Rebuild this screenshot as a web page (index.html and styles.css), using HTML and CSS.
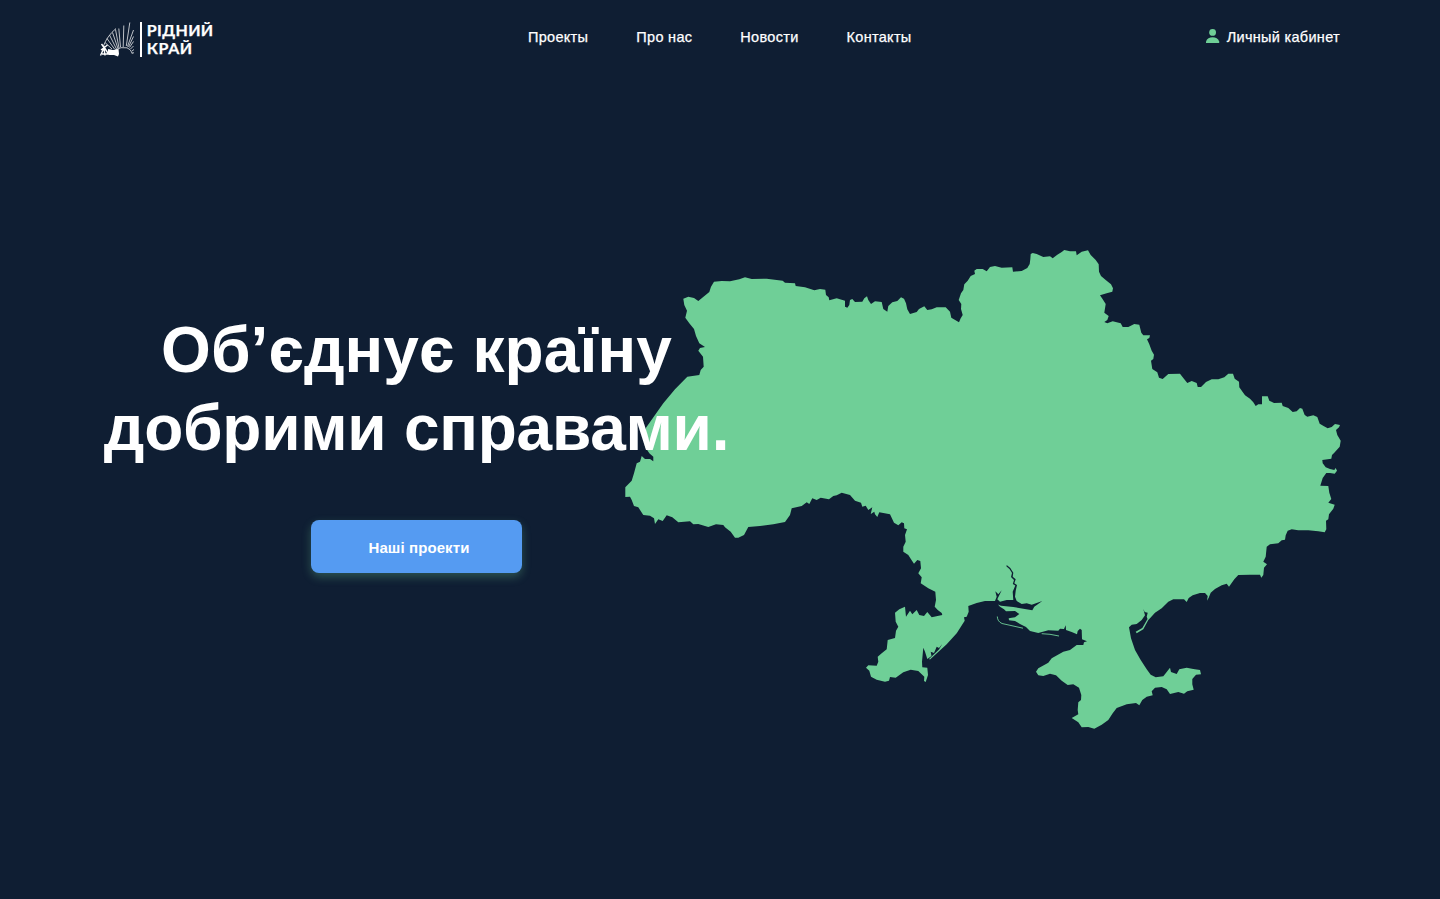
FILE: index.html
```html
<!DOCTYPE html>
<html lang="uk">
<head>
<meta charset="utf-8">
<title>Рідний край</title>
<link rel="stylesheet" href="styles.css">
</head>
<body>
<div class="page">
  <header class="header">
    <a class="logo" aria-label="Рідний край">
      <svg width="114" height="36" viewBox="99 21 114 36">
        <g class="logo-rays">
          <path d="M103 47Q107 36 116 28.500M129.800 22.500L126.300 46M123.800 25.500L123.200 47M118.800 28.500L120.500 47M115.500 29.500L119 48M112.500 32.500L118 48.500M109.500 35L116.500 49M107 38.500L114.500 49M105 42.500L112 49M133.500 30L127.500 46.500M133.500 36.500L128.500 47M133.500 41.500L129.500 47.500M133.500 46L130.500 49M134 49.500L132 51M134 53L132.500 52.500"/>
          <path d="M115 50Q121 46.500 127 47.800Q131 49 132.500 54"/>
        </g>
        <path class="logo-fill" d="M108 49L113 50L118.500 49L119 54L118 56.500L114 55L109 55L108 53Z"/>
        <path class="logo-mill" d="M100.500 55.500L104 48L105 55.500M101.500 44L107 51.500M107.500 45L101 50M104 47L108.500 54M102 54H109"/>
        <rect class="logo-fill" x="140" y="22" width="2" height="35"/>
        <text class="logo-text" x="146.700" y="36" textLength="66.500">РІДНИЙ</text>
        <text class="logo-text" x="146.700" y="54" textLength="45.500">КРАЙ</text>
      </svg>
    </a>
    <nav class="nav">
      <a class="link">Проекты</a>
      <a class="link">Про нас</a>
      <a class="link">Новости</a>
      <a class="link">Контакты</a>
    </nav>
    <a class="account">
      <svg class="account-icon" width="14" height="14" viewBox="0 0 14 14"><circle cx="6.600" cy="3.400" r="3.400"/><path d="M0 14V12.500C1 9.500 3.500 8.300 6.600 8.300S12.200 9.500 13.200 12.500V14Z"/></svg>
      <span class="link">Личный кабинет</span>
    </a>
  </header>
  <main class="hero">
    <section class="intro">
      <h1 class="title"><span class="line line-one">Об’єднує країну</span><span class="line line-two">добрими справами.</span></h1>
      <a class="button">Наші проекти</a>
    </section>
    <svg class="map" width="718" height="481" viewBox="624 249 718 481">
      <path d="M683.3 298.7L688.3 296.7L694 298L698.3 301L709.3 292L711 286.700L714 281.700L721.700 281L730 281.300L739.300 279.300L745 277.300L751.700 279L766.700 278.700L776.700 280L782.700 280.700L785 282.700L795 283.300L795.700 286L805 287.300L814.300 290.300L820 289L825.300 289.700L826 295L828.700 297.300L829.300 300.300L836.700 298.300L845 300.700L845 306.700L847.300 307.700L849.300 305L850 300L852.300 299L855 302L862.300 301.700L864.300 298.300L867 296.300L868.300 300L871 304L875 301.300L881.700 302L883.300 309L887.300 311.700L888.300 306L892.300 302.300L897.300 301L901 297.300L904 298.700L906 303.300L907.300 309.300L910 314L916.700 312L919 309L924.300 306.300L927.300 310L931.700 309.300L936.700 307.300L945.700 307.300L950 311.700L951.300 317.700L959 322.300L960.700 318.300L962.700 315L961 309L961.300 304L958.700 300L961 293.300L963.300 290L964.300 284.300L967.700 280.700L970.700 276L975 274L974.300 270.700L976.700 269L982.700 269L986.700 271.300L990 267L995 266L1001.700 267.700L1012.300 267.300L1013 271.700L1021.700 271L1027.300 268L1029.700 264L1030.300 259.300L1030.700 254L1032.700 253L1036.700 254L1043.300 257L1050 256.300L1052.700 258.300L1057.300 254.700L1061.700 252L1064.300 250L1070 251.300L1076 251.300L1076.700 255.300L1081.700 251.700L1088 250.300L1090.700 255L1095.700 260L1098.700 264.300L1099 271.700L1101 276L1106 280.300L1111 284.300L1113 288.300L1112.300 291.700L1106.700 293.300L1100 295.300L1102.700 299.300L1105.700 304L1104.300 312.700L1108.700 316L1107.300 320L1104.300 322L1107.300 323.300L1112.700 321.300L1120.700 323.300L1122.700 327L1128.300 327L1134.300 324L1139.300 324.700L1141.300 332.700L1143.300 335.300L1150 335.300L1149.300 338L1147 339.300L1149.300 344.300L1151.700 350.700L1154 354.700L1153.300 359L1151 360.700L1152.300 369L1157.300 372.300L1159 377.700L1162.700 379L1168.300 374L1180 373.700L1183.300 378L1187.300 383L1191.700 381L1196.700 383L1197.700 387L1201 387L1206 382L1211.700 379.300L1218.300 379.300L1224.300 377.300L1228.300 373.700L1233 373.700L1234.700 378.700L1239 381.700L1239.300 387.300L1245 395.300L1250 398.700L1253.300 402.300L1255.700 406L1258.300 404.300L1262 404.300L1262 396.300L1267.700 396.300L1269.300 400.700L1274 403L1281.700 402.700L1282.700 406L1288.300 408L1292.700 412L1296.700 411.300L1300 408L1302.300 408.700L1304.700 415L1307.300 416.700L1313.300 415.300L1317.300 417L1319.700 423.700L1324 426.300L1327.700 428.300L1331.700 427L1335 424L1340 425L1339 427.300L1336 430L1337.300 435L1340.700 440.700L1339.700 446.700L1334.300 452.700L1332 455L1331.300 458.700L1322.300 460L1322.700 463.300L1325.700 467.300L1330 469L1334.300 470L1335.700 468L1337 470.700L1334.700 473.700L1330 473L1326.300 473L1322.700 478L1320.300 485.700L1328.300 486L1329.300 492.700L1331.300 499L1328.300 502.700L1334.700 504.700L1333.300 508.700L1329 514.300L1328.300 519.300L1326 520.700L1326.300 529.300L1324.700 532.300L1318.300 531.300L1308.300 530.300L1298.300 530.300L1291.700 529.300L1287.700 530.700L1285.700 535.300L1285 539.700L1281.700 540.300L1278.300 543.300L1270 544.300L1266.700 546.700L1265.700 556.700L1263.300 561.700L1267 564.300L1264 567.700L1263.300 575L1261.300 577.700L1260 574.700L1250 574.700L1238.300 575L1234.300 579.300L1229 586.700L1226.700 583.700L1221.700 585.300L1215 589L1210.700 592.700L1208.700 597.700L1207 600.700L1207.700 596L1205 593L1200 593L1192.700 595.300L1188.700 598L1186.700 602L1184 599.300L1173.300 599.300L1168.300 601.700L1161.700 608.300L1155 612.700L1150 618.300L1148.300 620L1143.300 629.200L1136.700 633.300L1135.700 631.700L1142.300 628L1147.500 619L1146.700 616.700L1147.700 612.700L1144.700 612L1143.300 609L1145 615.300L1141.700 620L1136.700 624L1131.700 624.700L1129 627.300L1131 638.300L1135 650L1140.700 660L1146.700 669.300L1150.700 674.700L1155.700 677.300L1163.300 676.300L1166.700 672L1170 667.700L1171 672L1176.700 674L1179.300 669.300L1186.700 667.700L1193.300 669L1200 670L1201 674.300L1196 674.700L1192.300 679L1192.300 684.300L1193.700 689.700L1187.300 691.300L1184 693.700L1178.300 692L1170 694L1166.700 689.300L1161.700 687L1155 687.700L1151.700 691.300L1152.700 695.300L1146.700 696.700L1142.300 700L1139.300 705.300L1136 703L1126.700 704.300L1116.700 708L1112.700 713.300L1108.300 720L1101.700 724.700L1094.300 728.700L1088.300 727L1081.700 727.300L1078.300 722.300L1071.700 718L1078.300 714.300L1077.700 710L1078.300 702.300L1081 700L1081.300 695L1079 687.700L1073.300 684.300L1067.700 685L1061.700 680.700L1056 675.300L1050 673.700L1043.300 676L1038.300 675.300L1036 671.700L1038.300 668.300L1048.300 662.700L1051.700 658.300L1063.300 651.700L1070 650L1076.700 645L1083.300 645L1084 642.300L1087 641.300L1082 639.300L1081.700 630L1080 628.700L1077.700 631L1077 634.300L1071.700 632L1066 630L1065.700 625.300L1064 629L1060 628.700L1058.300 630.700L1048.300 630.300L1038.300 633L1030 631L1026 627L1020 624L1015 621L1009 620.300L1008.700 618.300L1015 617.300L1019.300 614L1015 611L1006 611.300L1004 609.300L1000 606.700L998 604.500L1001 605.800L1013.300 607L1023.300 608.700L1032.300 610.300L1034.300 606.700L1042.300 601L1031.700 604.700L1026.700 603.300L1021.700 604L1016.700 601L1015 596.700L1015.700 590.700L1017 585L1014.300 583.300L1015.700 579.300L1012.700 576.700L1013.300 572.700L1010.300 568L1006.700 565L1006.500 566.500L1009.500 569L1012 573L1011 577L1014 580L1012.800 584L1015.300 585.500L1012.700 591.700L1013.300 600L1006.700 600L1000 601.700L997.300 599.300L1001.700 590.300L998.300 594.300L995.300 591.300L996.700 596.700L995 601L985 601L976.700 603L968.300 606L968.700 611.700L966.700 616.700L964 617.300L964.700 620.700L956.700 633.300L946.700 644.300L930 659.500L929 659L939 649.500L942.300 644L939 648L936.700 646.700L935 650.700L934 653L930.700 651.700L931.500 656L927.300 659L925 651.700L923.300 647.700L922 661.700L922.300 667.300L927.300 667.700L928 675L925.700 682L924 681L924.300 676.700L918.300 671L910.700 669.700L903.300 672.300L895.700 677.700L890 677L889 680.700L885 681.700L876.700 679.700L871 676.700L869.300 670.700L866 667.700L868.300 665.300L876.700 665.700L878.300 661.700L877.700 656.700L881.700 653.300L886.700 649.300L887.700 640L895 638L896 630.700L898.300 626.700L895.700 621.700L895 612.700L899.300 609.300L905 606.700L906 616.700L910 610.700L912.300 614.300L916.700 610L919.300 615L924 616L927.300 612L931.700 617.300L942.300 615L941.700 613L937.700 610L934.700 606.700L936 600L935.300 591.700L928.300 588.300L920.700 583.300L921.700 577.300L918.300 573.300L921 568.300L920.300 561L917.300 560L914 563.700L911 559.300L908.300 555L903.300 551.700L903.300 546.700L905.700 541.700L905 535L907 529.300L904.300 528.300L904 523.300L901.700 522.300L898.300 525.300L894 522.700L890 514.300L879.300 512.300L877.300 517L875 514.300L874.300 511.700L870.700 514L872.300 507.300L868.300 510L865.700 505.700L862.300 506.700L861 502.700L855 500.700L850 495L841.700 492.700L836.700 495.300L833.300 496L829 499.300L820.700 497.700L816.700 500L812.300 498.300L809.300 504L806.700 502.300L801.700 506L791.700 508.300L790 515L785 522L773.300 524.300L760 526L748.300 527L744 535L738.300 537.700L735 537.700L730.700 531.700L725 527.300L723.300 525L716 524.300L708.300 527L698.300 524L693.300 524.300L690 521.300L678.300 522.300L672.300 517.300L666.700 515.300L662.700 521L658.300 519.300L655 524L654 518.300L650 515.700L643.300 515L638.300 507.300L634 506L631.700 500L630 496.700L625.300 497L625.300 487.300L631.700 480.700L634 473.300L636.700 463.300L640 461.700L641.700 456L645 459L650 459L653.300 461.300L653.300 456.700L649.300 453.300L645 446.700L644.300 436.700L646 427.700L652.700 418.300L663.300 403.300L675 389.300L687.300 376.700L699.300 375L700.700 370L703.700 366.700L703 356.700L698.300 350.700L700 348L705 347L699.300 343.300L696 336L694 329L689.300 323.300L685.300 317.700L687 310.700L684.300 305Z"/>
      <path class="spit" d="M997.300 616.500Q997.500 621.500 1002 623.500L1023 628.200M1041.700 633.700L1050 634.300L1059 636"/>
    </svg>
  </main>
</div>
</body>
</html>
```
FILE: styles.css
```css
* { box-sizing: border-box; }
body { margin: 0; background: #0f1e33; color: #fff; font-family: "Liberation Sans", Arial, sans-serif; }
.page { height: 899px; overflow: hidden; }
.header { display: grid; grid-template-columns: 429px 1fr auto; padding: 21px 100px 0 99px; height: 78px; }
.logo svg, .account-icon { display: block; }
.logo-fill { fill: #fff; }
.logo-rays { fill: none; stroke: #fff; stroke-width: .85; opacity: .85; }
.logo-mill { fill: none; stroke: #fff; stroke-width: 1.4; }
.logo-text { fill: #fff; stroke: #fff; stroke-width: .25px; font: 700 16px Lato, sans-serif; }
.nav { display: flex; gap: 48px; padding-top: 8px; }
.link { font-size: 14.5px; line-height: 17px; letter-spacing: .3px; white-space: nowrap; -webkit-text-stroke: .25px #fff; }
.account { display: flex; gap: 7px; padding-top: 8px; }
.account-icon { fill: #6fcf97; }
.hero { display: grid; grid-template-columns: 525px 716px; padding: 171px 0 0 99px; }
.intro, .map { grid-row: 1; }
.intro { grid-column: 1; z-index: 1; display: flex; flex-direction: column; align-items: center; width: 635px; padding-top: 62px; }
.map { grid-column: 2; fill: #6fcf97; }
.spit { fill: none; stroke: #6fcf97; stroke-width: .9; }
.title { margin: 0; font-size: 64px; line-height: 78px; text-align: center; white-space: nowrap; }
.line { display: block; }
.line-one { letter-spacing: .1px; }
.line-two { letter-spacing: -.25px; }
.button { margin-top: 53px; width: 211px; height: 53px; padding-left: 5px; border-radius: 8px; background: #559bf2; box-shadow: 0 4px 10px rgba(111, 207, 151, .3); font-size: 15px; font-weight: 700; line-height: 56px; letter-spacing: .1px; text-align: center; }
```
